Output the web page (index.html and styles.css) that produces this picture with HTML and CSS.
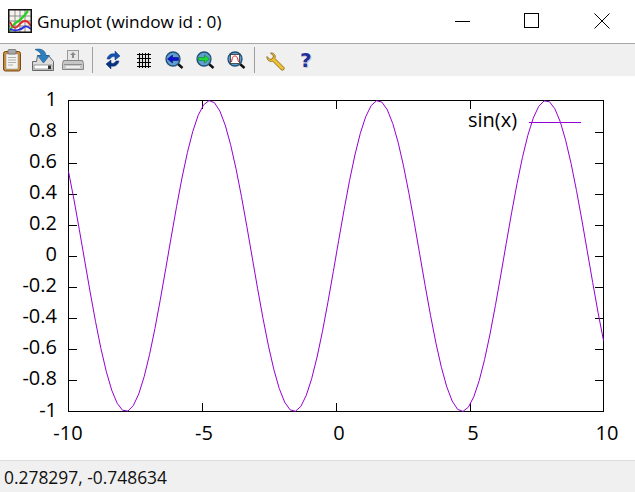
FILE: index.html
```html
<!DOCTYPE html>
<html lang="en">
<head>
<meta charset="utf-8">
<title>Gnuplot (window id : 0)</title>
<link rel="stylesheet" href="styles.css">
</head>
<body>
<div class="window">
  <header class="titlebar">
    <svg class="app-icon" width="24" height="24" viewBox="0 0 24 24">
      <rect x="0.5" y="0.5" width="23" height="23" fill="#f6f2ea"/>
      <path d="M1 7h22M1 12h22M1 17h22M7 1v22M12 1v22M17 1v22" stroke="#8d8d8d" stroke-width="1" fill="none"/>
      <path d="M2 22 Q5 15 9 13 T20 2" stroke="#22d022" stroke-width="2.200" fill="none"/>
      <path d="M2 13 Q6 22 10 17 T17 12 T23 17" stroke="#e02828" stroke-width="1.800" fill="none"/>
      <path d="M2 20 Q6 22 10 21 T16 18 T23 20" stroke="#2a2ae8" stroke-width="1.800" fill="none"/>
      <rect x="0.750" y="0.750" width="22.500" height="22.500" fill="none" stroke="#111" stroke-width="1.500"/>
    </svg>
    <span class="title">Gnuplot (window id : 0)</span>
    <div class="controls">
      <span class="ctl"><svg width="16" height="16" viewBox="0 0 16 16"><path d="M1 8.500h15" stroke="#000" fill="none"/></svg></span>
      <span class="ctl"><svg width="16" height="16" viewBox="0 0 16 16"><rect x="0.5" y="0.5" width="14" height="14" fill="none" stroke="#000"/></svg></span>
      <span class="ctl"><svg width="16" height="16" viewBox="0 0 16 16"><path d="M0.5 0.5l15 15M15.5 0.5l-15 15" stroke="#000" fill="none"/></svg></span>
    </div>
  </header>

  <nav class="toolbar">
    <span class="tool"><svg width="24" height="24" viewBox="0 0 24 24">
      <rect x="3.500" y="3.500" width="17" height="19.500" rx="2" fill="#c98b3f" stroke="#7a4a12"/>
      <rect x="6" y="6" width="12" height="15" fill="#f2f2ee" stroke="#999" stroke-width=".6"/>
      <rect x="8" y="1.500" width="8" height="4.500" rx="1" fill="#a8a8a8" stroke="#666" stroke-width=".7"/>
      <path d="M8 9.500h8M8 12h8M8 14.500h8M8 17h5" stroke="#b0b0b0" fill="none"/>
    </svg></span>
    <span class="tool"><svg width="24" height="24" viewBox="0 0 24 24">
      <path d="M1.500 13.500h4l1-6h11l5 6v9h-21z" fill="#dcdcdc" stroke="#666"/>
      <rect x="3" y="17" width="18" height="4" fill="#fff" stroke="#777" stroke-width=".7"/>
      <rect x="17" y="17.500" width="3" height="3.500" fill="#333"/>
      <path d="M4 1.500c6-1.500 10.500 1 11 6h3.500l-6 7.500-6-7.500h3.500c0-2.500-2.500-4.500-6-6z" fill="#2f7fc0" stroke="#1d5587" stroke-width=".6"/>
    </svg></span>
    <span class="tool"><svg width="24" height="24" viewBox="0 0 24 24">
      <rect x="6.500" y="2.500" width="11" height="10" fill="#e6e6e6" stroke="#999"/>
      <path d="M12 4l3 3h-2v3h-2v-3h-2z" fill="#8a8a8a"/>
      <path d="M2.500 12.500h19l1 3v6h-21v-6z" fill="#c6c6c6" stroke="#858585"/>
      <path d="M3 16.500h18" stroke="#8f8f8f" fill="none"/>
      <rect x="5" y="18" width="14" height="2" fill="#eee"/>
    </svg></span>
    <span class="sep"></span>
    <span class="tool"><svg width="24" height="24" viewBox="0 0 24 24">
      <path d="M6 11c1-4 4-6 8-5v-3l5 5-5 4v-3c-2-1-4 0-5 2z" fill="#1252b5" stroke="#0a2f75" stroke-width=".5"/>
      <path d="M18 13c-1 4-4 6-8 5v3l-5-5 5-4v3c2 1 4 0 5-2z" fill="#08327e" stroke="#0a2f75" stroke-width=".5"/>
    </svg></span>
    <span class="tool"><svg width="24" height="24" viewBox="0 0 24 24">
      <path d="M5 6.500h14M5 10.500h14M5 14.500h14M5 18.500h14M7.500 5v15M10.500 5v15M13.500 5v15M16.500 5v15" stroke="#000" stroke-width="1.100" fill="none"/>
    </svg></span>
    <span class="tool"><svg width="24" height="24" viewBox="0 0 24 24">
      <path d="M16 16l4.500 4" stroke="#111" stroke-width="2.500" fill="none"/>
      <circle cx="11" cy="11" r="7" fill="#5f9fd0" stroke="#1f4e74" stroke-width="1.300"/>
      <path d="M5.500 11l5-4v2.500h6v3h-6v2.500z" fill="#0c10d0" stroke="#06066a" stroke-width=".5"/>
    </svg></span>
    <span class="tool"><svg width="24" height="24" viewBox="0 0 24 24">
      <path d="M16 16l4.500 4" stroke="#111" stroke-width="2.500" fill="none"/>
      <circle cx="11" cy="11" r="7" fill="#5f9fd0" stroke="#1f4e74" stroke-width="1.300"/>
      <path d="M16.500 11l-5-4v2.500h-6v3h6v2.500z" fill="#1ed83a" stroke="#0a6a16" stroke-width=".5"/>
    </svg></span>
    <span class="tool"><svg width="24" height="24" viewBox="0 0 24 24">
      <path d="M16 16l4.500 4" stroke="#111" stroke-width="2.500" fill="none"/>
      <circle cx="11" cy="11" r="7" fill="#5f9fd0" stroke="#1f4e74" stroke-width="1.300"/>
      <rect x="6.500" y="6.500" width="9" height="9" fill="#fff" stroke="#333" stroke-width=".8"/>
      <path d="M7.500 14c1-6 2-6 3.500-6s2.500 1 3.500 6" stroke="#d82020" fill="none"/>
    </svg></span>
    <span class="sep"></span>
    <span class="tool"><svg width="24" height="24" viewBox="0 0 24 24">
      <path d="M19 20.500l-9-9c1-3-1-6-4.500-5.500l3 3-1 2.500-2.500 1-3-3c-.5 3.500 3 6 5.500 4.500l9 9c1.500 1 3.500-1 2.500-2.500z" transform="translate(2 -1)" fill="#efc030" stroke="#7a5c10" stroke-width=".8"/>
    </svg></span>
    <span class="tool help">?</span>
  </nav>

  <main class="canvas">
    <svg class="plot" id="plot" width="635" height="384" viewBox="0 76 635 384">
      <defs><clipPath id="frame"><rect x="68" y="100" width="536" height="312"/></clipPath></defs>
      <g id="ticks" class="axis"></g>
      <rect class="frame" x="68.500" y="100.500" width="535" height="311"/>
      <polyline id="curve" class="curve" clip-path="url(#frame)"/>
      <g class="lab ylab">
        <text x="57" y="106">1</text>
        <text x="57" y="137">0.8</text>
        <text x="57" y="168">0.6</text>
        <text x="57" y="199">0.4</text>
        <text x="57" y="230">0.2</text>
        <text x="57" y="261">0</text>
        <text x="57" y="292">-0.2</text>
        <text x="57" y="323">-0.4</text>
        <text x="57" y="354">-0.6</text>
        <text x="57" y="385">-0.8</text>
        <text x="57" y="417">-1</text>
      </g>
      <g class="lab xlab">
        <text x="68" y="440">-10</text>
        <text x="204" y="440">-5</text>
        <text x="339" y="440">0</text>
        <text x="473" y="440">5</text>
        <text x="607" y="440">10</text>
      </g>
      <text class="lab" x="468" y="127">sin(x)</text>
      <path class="curve" d="M529 122.500h52"/>
    </svg>
  </main>

  <footer class="status">0.278297, -0.748634</footer>
</div>
<script src="plot.js"></script>
</body>
</html>
```

FILE: styles.css
```css
* { box-sizing: border-box; }
html, body { margin: 0; padding: 0; background: #fff; }
body { font-family: "Open Sans", "Noto Sans", sans-serif; color: #000; overflow: hidden; }
.window { width: 635px; height: 492px; display: flex; flex-direction: column; }

.titlebar { height: 44px; flex: none; display: flex; align-items: center; padding-left: 8px; border-bottom: 1px solid #a6a6a6; background: #fff; }
.app-icon { flex: none; margin-right: 5px; margin-top: -1px; }
.title { font-size: 17.2px; color: #000; margin-top: -1px; white-space: nowrap; }
.controls { margin-left: auto; display: flex; gap: 54px; padding-right: 25px; }
.ctl { width: 16px; height: 43px; display: flex; align-items: center; justify-content: center; }
.ctl svg { display: block; margin-top: -1px; }

.toolbar { height: 32px; flex: none; background: #f0f0f0; display: flex; align-items: center; gap: 6.67px; }
.tool { width: 24px; height: 24px; flex: none; display: flex; align-items: center; justify-content: center; }
.tool svg { display: block; }
.help { font-family: "DejaVu Sans", sans-serif; font-weight: 700; font-size: 20px; color: #1f2f9e; text-shadow: 1px 1px 0 #c9c9c9; }
.sep { width: 1px; height: 26px; background: #a0a0a0; flex: none; margin-right: 1.3px; }

.canvas { flex: 1; min-height: 0; background: #fff; }
.plot { display: block; }
.frame { fill: none; stroke: #000; stroke-width: 1; }
.axis path { stroke: #000; stroke-width: 1; fill: none; }
.curve { fill: none; stroke: #9400d3; stroke-width: 1; }
.lab { font-family: "Open Sans", "Noto Sans", sans-serif; font-size: 20px; fill: #000; }
.ylab { text-anchor: end; }
.xlab { text-anchor: middle; }

.status { height: 32px; flex: none; background: #f0f0f0; border-top: 1px solid #dcdcdc; font-size: 17.4px; color: #111; padding: 0 0 0 4px; display: flex; align-items: center; white-space: nowrap; }
```

FILE: plot.js
```js
(function () {
  var L = 68.5, R = 603.5, T = 100.5, B = 411.5, N = 100;
  var pts = [];
  for (var i = 0; i < N; i++) {
    var x = -10 + 20 * i / (N - 1);
    var px = L + (x + 10) / 20 * (R - L);
    var py = T + (1 - Math.sin(x)) / 2 * (B - T);
    pts.push(px.toFixed(2) + "," + py.toFixed(2));
  }
  document.getElementById("curve").setAttribute("points", pts.join(" "));
  var d = "";
  for (var k = 1; k < 10; k++) {
    var y = Math.round(T + k * (B - T) / 10) + 0.5;
    d += "M68 " + y + "h9M604 " + y + "h-9";
  }
  [-5, 0, 5].forEach(function (v) {
    var tx = Math.round(L + (v + 10) / 20 * (R - L)) + 0.5;
    d += "M" + tx + " 100v9M" + tx + " 412v-9";
  });
  var p = document.createElementNS("http://www.w3.org/2000/svg", "path");
  p.setAttribute("d", d);
  document.getElementById("ticks").appendChild(p);
})();
```
